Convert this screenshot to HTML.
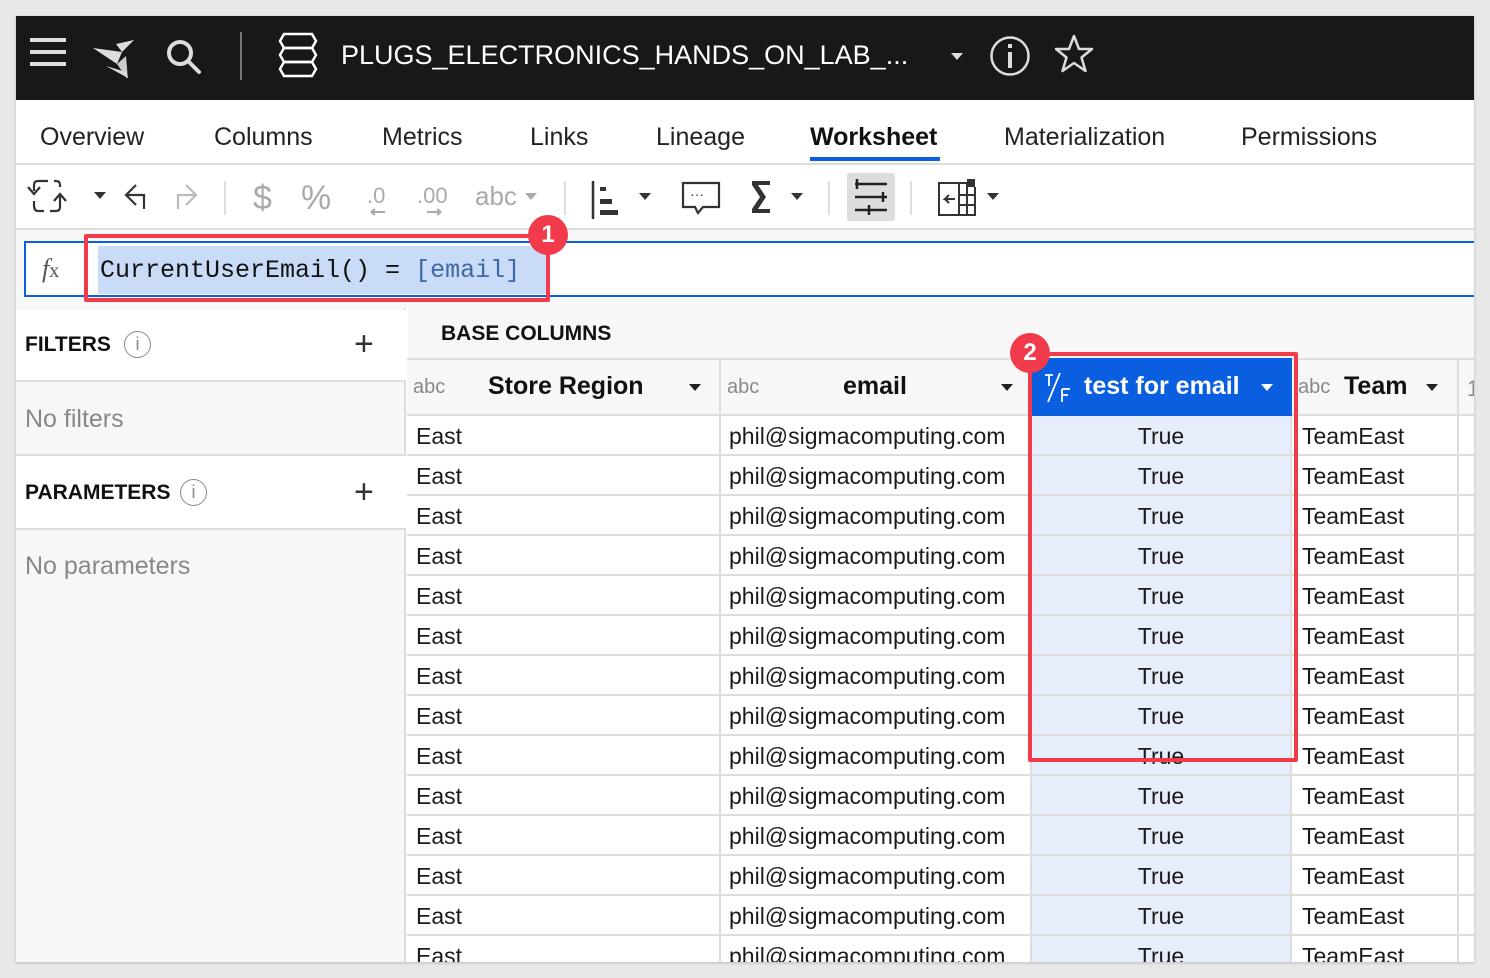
<!DOCTYPE html>
<html><head><meta charset="utf-8">
<style>
*{box-sizing:border-box;margin:0;padding:0}
body{width:1490px;height:978px;background:#e8e8e8;font-family:"Liberation Sans",sans-serif;position:relative;overflow:hidden}
.a{position:absolute}
.app{left:16px;top:16px;width:1458px;height:946px;background:#fff;overflow:hidden;box-shadow:0 1px 3px rgba(0,0,0,.2)}
.hdr{left:0;top:0;width:1458px;height:84px;background:#181818}
.tab{top:107px;font-size:25px;color:#222}
.cell{position:absolute;height:40px;line-height:40px;font-size:23px;color:#1a1a1a;border-right:2px solid #ddd;border-bottom:2px solid #ddd;white-space:nowrap;overflow:hidden}
.hc{position:absolute;top:342px;height:58px;background:#f7f7f7;border-right:2px solid #ddd;border-bottom:2px solid #ddd;border-top:2px solid #ddd}
.abc{position:absolute;top:16px;font-size:20px;color:#888}
.hn{position:absolute;top:12px;font-size:25px;font-weight:bold;color:#111}
.tri{position:absolute;width:0;height:0;border-left:6px solid transparent;border-right:6px solid transparent;border-top:7px solid #222}
</style></head><body>
<div class="a app">
 <div class="a hdr">
  <div class="a" style="left:14px;top:22px;width:36px;height:4px;background:#ddd"></div>
  <div class="a" style="left:14px;top:34px;width:36px;height:4px;background:#ddd"></div>
  <div class="a" style="left:14px;top:46px;width:36px;height:4px;background:#ddd"></div>
  <svg class="a" style="left:76px;top:20px" width="48" height="42" viewBox="0 0 48 42"><path d="M1 12 L25 28 L30 16 Z" fill="#ddd"/><path d="M30 16 L24 8 L42 4 L36 10 Z" fill="#ddd"/><path d="M25 28 L36 44 L34 20 Z" fill="#ccc"/><path d="M14 30 L34 36 L36 42Z" fill="#ddd"/></svg>
  <svg class="a" style="left:148px;top:20px" width="40" height="40" viewBox="0 0 40 40"><circle cx="16" cy="17" r="11" fill="none" stroke="#ddd" stroke-width="4"/><path d="M24 25 L35 36" stroke="#ddd" stroke-width="4" stroke-linecap="round"/></svg>
  <div class="a" style="left:224px;top:16px;width:2px;height:48px;background:#777"></div>
  <svg class="a" style="left:260px;top:16px" width="44" height="48" viewBox="0 0 44 48"><g fill="none" stroke="#fff" stroke-width="2.5"><path d="M8 2 H36 L40 9 L36 16 H8 L4 9 Z"/><path d="M8 16 H36 L40 23 L36 30 H8 L4 23 Z"/><path d="M8 30 H36 L40 37 L36 44 H8 L4 37 Z"/></g></svg>
  <div class="a" style="left:325px;top:24px;font-size:27px;color:#fff;white-space:nowrap">PLUGS_ELECTRONICS_HANDS_ON_LAB_...</div>
  <div class="tri" style="left:935px;top:37px;border-top-color:#ddd"></div>
  <svg class="a" style="left:972px;top:18px" width="44" height="44" viewBox="0 0 44 44"><circle cx="22" cy="22" r="18.5" fill="none" stroke="#ddd" stroke-width="2.5"/><rect x="20" y="18" width="4" height="16" fill="#ddd"/><rect x="20" y="10" width="4" height="4" fill="#ddd"/></svg>
  <svg class="a" style="left:1036px;top:16px" width="44" height="44" viewBox="0 0 44 44"><path d="M22 4 L27 17 L40 17 L29.5 25.5 L33.5 39 L22 31 L10.5 39 L14.5 25.5 L4 17 L17 17 Z" fill="none" stroke="#ddd" stroke-width="2.5" stroke-linejoin="round"/></svg>
 </div>
 <div class="a tab" style="left:24px">Overview</div>
 <div class="a tab" style="left:198px">Columns</div>
 <div class="a tab" style="left:366px">Metrics</div>
 <div class="a tab" style="left:514px">Links</div>
 <div class="a tab" style="left:640px">Lineage</div>
 <div class="a tab" style="left:794px;font-weight:bold;color:#111">Worksheet</div>
 <div class="a" style="left:794px;top:141px;width:130px;height:4px;background:#0a5ee0"></div>
 <div class="a tab" style="left:988px">Materialization</div>
 <div class="a tab" style="left:1225px">Permissions</div>
 <div class="a" style="left:0;top:147px;width:1458px;height:2px;background:#ddd"></div>
 <!-- toolbar -->
 <svg class="a" style="left:-6px;top:149px" width="1000" height="60" viewBox="0 0 1000 60">
  <g fill="none" stroke="#333" stroke-width="2.2">
   <path d="M38 16 H28 Q24 16 24 20 V26 M18 22 L24 29 L30 22"/>
   <path d="M24 36 V40 Q24 46 28 46 H34"/>
   <path d="M40 46 H46 Q50 46 50 42 V30 M44 36 L50 29 L56 36"/>
   <path d="M50 22 V20 Q50 16 46 16 H44"/>
   <path d="M126 20 L116 30 L126 40 M116 30 H134 V44" stroke="#333"/>
   <path d="M176 20 L186 30 L176 40 M186 30 H168 V44" stroke="#bbb"/>
  </g>
  <path d="M84 27 h12 l-6 7z" fill="#333"/>
  <line x1="215" y1="16" x2="215" y2="50" stroke="#ddd" stroke-width="2"/>
  <g transform="translate(-15,0)">
  <text x="258" y="44" font-size="34" fill="#aaa" font-family="Liberation Sans">$</text>
  <text x="306" y="44" font-size="34" fill="#aaa" font-family="Liberation Sans">%</text>
  <text x="372" y="38" font-size="22" fill="#aaa" font-family="Liberation Sans">.0</text>
  <path d="M376 47 h14 M376 47 l4 -3 M376 47 l4 3" stroke="#aaa" stroke-width="2"/>
  <text x="422" y="38" font-size="22" fill="#aaa" font-family="Liberation Sans">.00</text>
  <path d="M432 47 h14 M446 47 l-4 -3 M446 47 l-4 3" stroke="#aaa" stroke-width="2"/>
  <text x="480" y="40" font-size="26" fill="#aaa" font-family="Liberation Sans">abc</text>
  <path d="M530 28 h12 l-6 7z" fill="#aaa"/>
  <line x1="570" y1="16" x2="570" y2="50" stroke="#ddd" stroke-width="2"/>
  <path d="M598 16 V54" stroke="#333" stroke-width="2.5"/><rect x="605" y="22" width="6" height="4" fill="#333"/><rect x="605" y="34" width="12" height="5" fill="#333"/><rect x="605" y="45" width="18" height="5" fill="#333"/>
  <path d="M644 28 h12 l-6 7z" fill="#333"/>
  <path d="M688 18 H724 V42 H708 L703 48 L700 42 H688 Z" fill="none" stroke="#333" stroke-width="2.2"/><text x="695" y="34" font-size="14" fill="#333">···</text>
  <path d="M757 16 H775 V20 H763 L771 32 L763 44 H775 V48 H757 V44 L765 32 L757 20 Z" fill="#333"/>
  <path d="M796 28 h12 l-6 7z" fill="#333"/>
  <line x1="834" y1="16" x2="834" y2="50" stroke="#ddd" stroke-width="2"/>
  <rect x="852" y="8" width="48" height="48" rx="3" fill="#ddd"/>
  <g stroke="#222" stroke-width="2.5"><path d="M860 19 H892 M860 32 H892 M860 45 H892 M862 14 V24 M888 27 V37 M874 40 V50"/></g>
  <line x1="916" y1="16" x2="916" y2="50" stroke="#ddd" stroke-width="2"/>
  <path d="M944 18 H972 V50 H944 Z M964 18 V50 M964 30 H980 M964 40 H980 M980 22 V50 H972" fill="none" stroke="#333" stroke-width="2"/><rect x="972" y="14" width="8" height="8" fill="#333"/><path d="M960 34 H950 L954 30 M950 34 L954 38" stroke="#333" stroke-width="2" fill="none"/>
  <path d="M992 28 h12 l-6 7z" fill="#333"/>
  </g>
 </svg>
 <div class="a" style="left:0;top:212px;width:1458px;height:80px;background:#f7f7f7;border-top:2px solid #ddd"></div>
 <div class="a" style="left:8px;top:225px;width:1460px;height:56px;background:#fff;border:2px solid #0a5ee0;border-right:none"></div>
 <div class="a" style="left:26px;top:238px;font-size:26px;color:#555;font-family:'Liberation Serif',serif;font-style:italic">f<span style="font-size:20px;font-style:normal">x</span></div>
 <div class="a" style="left:82px;top:230px;width:450px;height:48px;background:#c9dbf6"></div>
 <div class="a" style="left:84px;top:240px;font-family:'Liberation Mono',monospace;font-size:25px;color:#111;white-space:pre">CurrentUserEmail() = <span style="color:#3d6aa6">[email]</span></div>
 <div class="a" style="left:68px;top:218px;width:466px;height:68px;border:4px solid #f23b4a;border-radius:2px"></div>
 <div class="a" style="left:512px;top:199px;width:40px;height:40px;border-radius:50%;background:#f23b4a;color:#fff;font-weight:bold;font-size:24px;text-align:center;line-height:40px">1</div>
 <!-- left panel -->
 <div class="a" style="left:0;top:292px;width:390px;height:660px;background:#f7f7f7;border-right:2px solid #ddd"></div>
 <div class="a" style="left:0;top:294px;width:390px;height:72px;background:#fff;border-bottom:2px solid #ddd"></div>
 <div class="a" style="left:9px;top:317px;font-size:21px;font-weight:bold;color:#111">FILTERS</div>
 <div class="a" style="left:108px;top:315px;width:27px;height:27px;border:1.5px solid #888;border-radius:50%;text-align:center;font-size:18px;line-height:24px;color:#888">i</div>
 <div class="a" style="left:338px;top:309px;font-size:34px;color:#333;font-weight:300">+</div>
 <div class="a" style="left:9px;top:389px;font-size:25px;color:#888">No filters</div>
 <div class="a" style="left:0;top:438px;width:390px;height:76px;background:#fff;border-top:2px solid #ddd;border-bottom:2px solid #ddd"></div>
 <div class="a" style="left:9px;top:465px;font-size:21px;font-weight:bold;color:#111">PARAMETERS</div>
 <div class="a" style="left:164px;top:463px;width:27px;height:27px;border:1.5px solid #888;border-radius:50%;text-align:center;font-size:18px;line-height:24px;color:#888">i</div>
 <div class="a" style="left:338px;top:457px;font-size:34px;color:#333;font-weight:300">+</div>
 <div class="a" style="left:9px;top:536px;font-size:25px;color:#888">No parameters</div>
 <!-- grid -->
 <div class="a" style="left:392px;top:292px;width:1066px;height:50px;background:#f7f7f7"></div>
 <div class="a" style="left:425px;top:306px;font-size:21px;font-weight:bold;color:#111">BASE COLUMNS</div>
 <div class="hc" style="left:391px;width:314px"><span class="abc" style="left:6px">abc</span><span class="hn" style="left:81px">Store Region</span><div class="tri" style="left:282px;top:24px"></div></div>
 <div class="hc" style="left:705px;width:311px"><span class="abc" style="left:6px">abc</span><span class="hn" style="left:122px">email</span><div class="tri" style="left:280px;top:24px"></div></div>
 <div class="hc" style="left:1016px;width:260px;background:#0a5ee0;border-color:#0a5ee0">
  <svg class="a" style="left:12px;top:12px" width="30" height="32" viewBox="0 0 30 32"><g stroke="#fff" stroke-width="1.8" fill="none"><path d="M1 3 H9 M5 3 V14 M16 1 L4 30 M18 17 H26 M18 17 V30 M18 23 H24"/></g></svg>
  <span class="hn" style="left:52px;color:#fff">test for email</span><div class="tri" style="left:229px;top:24px;border-top-color:#fff"></div></div>
 <div class="hc" style="left:1276px;width:167px"><span class="abc" style="left:6px">abc</span><span class="hn" style="left:52px">Team</span><div class="tri" style="left:134px;top:24px"></div></div>
 <div class="hc" style="left:1443px;width:30px"><span class="abc" style="left:8px;font-size:22px">1</span></div>
 <div id="rows"></div>
 <div class="a" style="left:1012px;top:336px;width:270px;height:410px;border:4px solid #f23b4a;border-radius:2px"></div>
 <div class="a" style="left:994px;top:317px;width:40px;height:40px;border-radius:50%;background:#f23b4a;color:#fff;font-weight:bold;font-size:24px;text-align:center;line-height:40px">2</div>
</div>
<script>
var h='';for(var i=0;i<14;i++){var t=400+i*40;
h+='<div class="cell" style="left:391px;top:'+t+'px;width:314px;padding-left:9px">East</div>';
h+='<div class="cell" style="left:705px;top:'+t+'px;width:311px;padding-left:8px">phil@sigmacomputing.com</div>';
h+='<div class="cell" style="left:1016px;top:'+t+'px;width:260px;background:#e6eefb;text-align:center">True</div>';
h+='<div class="cell" style="left:1276px;top:'+t+'px;width:167px;padding-left:10px">TeamEast</div>';
h+='<div class="cell" style="left:1443px;top:'+t+'px;width:30px"></div>';}
document.getElementById('rows').outerHTML=h;
</script>
</body></html>
